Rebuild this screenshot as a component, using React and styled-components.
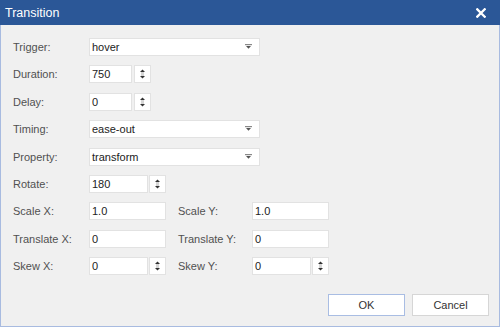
import styled, { createGlobalStyle } from "styled-components";

const Global = createGlobalStyle`
  html, body { margin: 0; padding: 0; background: #f0f0f0; }
  body { width: 500px; height: 327px; overflow: hidden; }
`;

const Dialog = styled.div`
  width: 500px;
  height: 327px;
  display: flex;
  flex-direction: column;
  font-family: "Liberation Sans", Arial, sans-serif;
`;

const TitleBar = styled.div`
  height: 25px;
  flex: none;
  background: #2b5797;
  display: flex;
  align-items: center;
  justify-content: space-between;
  padding: 0 14px 0 5px;
  color: #fff;
  font-size: 12.5px;
`;

const CloseBtn = styled.button`
  border: 0;
  background: none;
  padding: 0;
  width: 10px;
  height: 10px;
  display: flex;
  cursor: pointer;
`;

const Body = styled.div`
  flex: 1;
  box-sizing: border-box;
  border: 1px solid #a8bbe0;
  border-top: 0;
  background: #f0f0f0;
  padding: 13px 10px 0 12px;
  display: flex;
  flex-direction: column;
`;

const Form = styled.div`
  display: grid;
  grid-template-columns: 76px 77px 12px 74px 77px;
  grid-auto-rows: 18px;
  row-gap: 9.4px;
  align-items: center;
`;

const Label = styled.label`
  font-size: 11px;
  color: #505050;
  grid-column: ${(p) => p.col || 1};
`;

const Field = styled.div`
  grid-column: ${(p) => p.span || "auto"};
  display: flex;
  gap: ${(p) => p.gap || 1}px;
  height: 18px;
`;

const Box = styled.div`
  box-sizing: border-box;
  height: 18px;
  width: ${(p) => p.w}px;
  background: #fff;
  border: 1px solid #e2e2e2;
  font-size: 11px;
  color: #222;
  display: flex;
  align-items: center;
  justify-content: space-between;
  padding: 0 7px 0 2px;
`;

const Spin = styled.div`
  box-sizing: border-box;
  width: 17px;
  height: 18px;
  background: #fff;
  border: 1px solid #e2e2e2;
  display: flex;
  align-items: center;
  justify-content: center;
`;

const Footer = styled.div`
  margin-top: auto;
  margin-bottom: 10px;
  display: flex;
  justify-content: flex-end;
  gap: 7px;
`;

const Button = styled.button`
  box-sizing: border-box;
  width: 77px;
  height: 22px;
  background: #fff;
  border: 1px solid ${(p) => (p.primary ? "#a9bde3" : "#d6d6d6")};
  font-family: "Liberation Sans", Arial, sans-serif;
  font-size: 11px;
  color: #333;
  padding: 0;
`;

function Arrows() {
  return (
    <svg width="7" height="12" viewBox="0 0 7 12">
      <path d="M3.5 1.5 L6 4 L1 4 Z" fill="#333" />
      <rect x="2" y="4.6" width="3" height="0.8" fill="#999" />
      <rect x="2" y="6.6" width="3" height="0.8" fill="#999" />
      <path d="M1 8 L6 8 L3.5 10.5 Z" fill="#333" />
    </svg>
  );
}

function Caret() {
  return (
    <svg width="7" height="6" viewBox="0 0 7 6">
      <rect x="0" y="0" width="7" height="1.2" fill="#888" />
      <path d="M1 2 L6 2 L3.5 4.8 Z" fill="#555" />
    </svg>
  );
}

function Select({ value }) {
  return (
    <Field span="2 / 6">
      <Box w={171}>
        <span>{value}</span>
        <Caret />
      </Box>
    </Field>
  );
}

function Number({ value, w, gap, span }) {
  return (
    <Field span={span} gap={gap}>
      <Box w={w}>{value}</Box>
      <Spin>
        <Arrows />
      </Spin>
    </Field>
  );
}

function Text({ value }) {
  return (
    <Field>
      <Box w={77}>{value}</Box>
    </Field>
  );
}

export default function App() {
  return (
    <>
      <Global />
      <Dialog>
        <TitleBar>
          <span>Transition</span>
          <CloseBtn aria-label="Close">
            <svg width="10" height="10" viewBox="0 0 10 10">
              <path d="M1.3 1.3 L8.7 8.7 M8.7 1.3 L1.3 8.7" stroke="#fff" strokeWidth="2.3" strokeLinecap="square" />
            </svg>
          </CloseBtn>
        </TitleBar>
        <Body>
          <Form>
            <Label>Trigger:</Label>
            <Select value="hover" />

            <Label>Duration:</Label>
            <Number value="750" w={43} gap={2} span="2 / 6" />

            <Label>Delay:</Label>
            <Number value="0" w={43} gap={2} span="2 / 6" />

            <Label>Timing:</Label>
            <Select value="ease-out" />

            <Label>Property:</Label>
            <Select value="transform" />

            <Label>Rotate:</Label>
            <Number value="180" w={59} gap={1} span="2 / 6" />

            <Label>Scale X:</Label>
            <Text value="1.0" />
            <Label col={4}>Scale Y:</Label>
            <Text value="1.0" />

            <Label>Translate X:</Label>
            <Text value="0" />
            <Label col={4}>Translate Y:</Label>
            <Text value="0" />

            <Label>Skew X:</Label>
            <Number value="0" w={59} gap={1} />
            <Label col={4}>Skew Y:</Label>
            <Number value="0" w={59} gap={1} />
          </Form>
          <Footer>
            <Button primary>OK</Button>
            <Button>Cancel</Button>
          </Footer>
        </Body>
      </Dialog>
    </>
  );
}
